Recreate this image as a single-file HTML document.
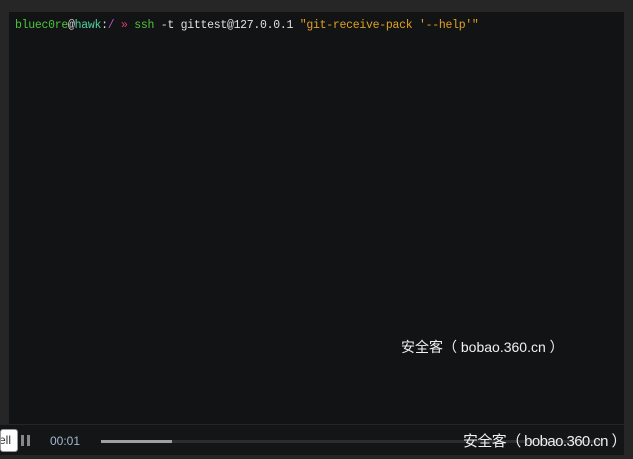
<!DOCTYPE html>
<html><head><meta charset="utf-8"><style>
body{margin:0;width:633px;height:459px;background:#262626;position:relative;overflow:hidden;font-family:"Liberation Sans","Noto Sans CJK SC",sans-serif}
.term{position:absolute;left:9px;top:12px;width:615px;height:412px;background:#121314}
.line{position:absolute;left:6px;top:7px;font-family:"Liberation Mono","DejaVu Sans Mono",monospace;font-size:11.5px;color:#e0e0e0;white-space:pre;letter-spacing:-0.28px}
.bar{position:absolute;left:0;top:425px;width:624px;height:30px;background:#141516}
.wm{position:absolute;color:#f0f0f0;font-size:14px;white-space:nowrap}
</style></head><body>
<div class="term"><div class="line"><span style="color:#4ec33a">bluec0re</span><span style="color:#ddd">@</span><span style="color:#4fd0a0">hawk</span><span style="color:#ddd">:</span><span style="color:#c050d0">/</span> <span style="color:#e04070">»</span> <span style="color:#4ec33a">ssh</span> -t gittest@127.0.0.1 <span style="color:#e0a020">"git-receive-pack '--help'"</span></div></div>
<div class="wm" style="left:401px;top:337px">安全客（ bobao.360.cn ）</div>
<div class="bar">
<div style="position:absolute;left:0;top:4px;width:16px;height:21px;background:#fff;border:1px solid #999;border-radius:3px;font-size:12px;color:#333;line-height:21px;text-indent:-2px;overflow:hidden">ell</div>
<div style="position:absolute;left:21px;top:10px;width:3px;height:11px;background:#888"></div>
<div style="position:absolute;left:27px;top:10px;width:3px;height:11px;background:#888"></div>
<div style="position:absolute;left:50px;top:9px;font-size:12px;color:#a0b8d0">00:01</div>
<div style="position:absolute;left:101px;top:15px;width:500px;height:3px;background:#2c2d2e"></div>
<div style="position:absolute;left:101px;top:15px;width:71px;height:3px;background:#a0a0a0"></div>
<div class="wm" style="left:463px;top:5px;font-size:15px;letter-spacing:-0.6px">安全客（ bobao.360.cn ）</div>
</div>
</body></html>
